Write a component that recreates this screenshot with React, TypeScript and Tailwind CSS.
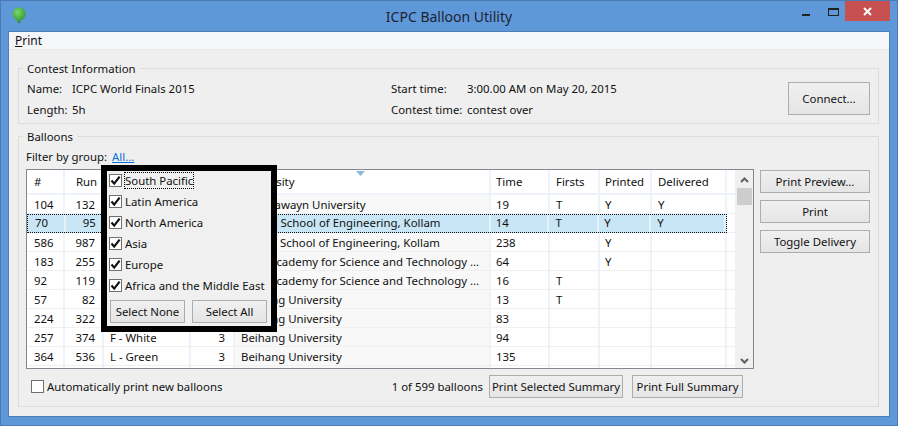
const columns = [
  { label: "#", width: "w-[38px]", cell: "pl-[7px]" },
  { label: "Run", width: "w-[39px]", cell: "pr-[7px] text-right", head: "pl-[11px]" },
  { label: "", width: "w-[87px]", cell: "pl-[6px]" },
  { label: "", width: "w-[44px]", cell: "pr-[8px] text-right" },
  { label: "University", width: "w-[256px]", cell: "pl-[6px]" },
  { label: "Time", width: "w-[59px]", cell: "pl-[5px]" },
  { label: "Firsts", width: "w-[50px]", cell: "pl-[6px]" },
  { label: "Printed", width: "w-[52px]", cell: "pl-[5px]" },
  { label: "Delivered", width: "w-[75px]", cell: "pl-[6px]" },
];

const rows = [
  ["104", "132", "", "", "Al Akhawayn University", "19", "T", "Y", "Y"],
  ["70", "95", "", "", "Amrita School of Engineering, Kollam", "14", "T", "Y", "Y"],
  ["586", "987", "", "", "Amrita School of Engineering, Kollam", "238", "", "Y", ""],
  ["183", "255", "", "", "Arab Academy for Science and Technology ...", "64", "", "Y", ""],
  ["92", "119", "", "", "Arab Academy for Science and Technology ...", "16", "T", "", ""],
  ["57", "82", "", "", "Beihang University", "13", "T", "", ""],
  ["224", "322", "", "", "Beihang University", "83", "", "", ""],
  ["257", "374", "F - White", "3", "Beihang University", "94", "", "", ""],
  ["364", "536", "L - Green", "3", "Beihang University", "135", "", "", ""],
];

const groups = [
  "South Pacific",
  "Latin America",
  "North America",
  "Asia",
  "Europe",
  "Africa and the Middle East",
];

function Btn({ children, className = "" }: { children: React.ReactNode; className?: string }) {
  return (
    <button className={`h-[23px] whitespace-nowrap border border-[#adadad] bg-gradient-to-b from-[#f0f0f0] to-[#e5e5e5] text-[#111] ${className}`}>
      {children}
    </button>
  );
}

function CheckBox({ checked }: { checked: boolean }) {
  return (
    <span className="flex h-[13px] w-[13px] shrink-0 items-center justify-center border border-[#707070] bg-white">
      {checked && (
        <svg width="11" height="11" viewBox="0 0 11 11">
          <path d="M1.5 5.5 L4.2 8.6 L9.6 1.6" fill="none" stroke="#111" strokeWidth="2.2" />
        </svg>
      )}
    </span>
  );
}

function GroupPopup() {
  return (
    <div className="absolute left-[100px] top-[164px] h-[167px] w-[176px] border-[6px] border-black bg-[#f0f0f0] pl-[2px]">
      <div className="-mt-[1px]">
        {groups.map((g, i) => (
          <div key={g} className="flex h-[21px] items-center gap-[2px] whitespace-nowrap">
            <CheckBox checked />
            <span className={i === 0 ? "border border-dotted border-black leading-[15px]" : "border border-transparent leading-[15px]"}>
              {g}
            </span>
          </div>
        ))}
      </div>
      <div className="mt-[4px] flex gap-[7px] pl-[1px]">
        <Btn className="w-[75px]">Select None</Btn>
        <Btn className="w-[75px]">Select All</Btn>
      </div>
    </div>
  );
}

function BalloonsTable() {
  return (
    <div className="flex h-[200px] w-[728px] border border-[#828790] bg-white">
      <div className="flex w-[708px] flex-col overflow-hidden">
        <div className="flex h-[25px] shrink-0 border-b-2 border-[#eef3fb]">
          <div className="flex w-[700px]">
            {columns.map((c, i) => (
              <div
                key={i}
                className={`relative flex items-center border-r-2 border-[#eef3fb] ${c.width} ${c.head ?? c.cell.replace("text-right", "")}`}
              >
                {c.label}
                {c.label === "University" && (
                  <svg className="absolute left-[121px] top-[1px]" width="9" height="5" viewBox="0 0 9 5">
                    <path d="M0 0 H9 L4.5 5 Z" fill="#8fb8d8" />
                  </svg>
                )}
              </div>
            ))}
          </div>
        </div>
        {[...rows, null].map((row, r) => (
          <div key={r} className="flex h-[19px] shrink-0 border-b border-[#f0f0f0]">
            <div className={`flex w-[700px] ${r === 1 ? "h-[19px] border border-dotted border-[#111] bg-[#c9e6f6] leading-[16px]" : "leading-[19px]"}`}>
              {columns.map((c, i) => (
                <div
                  key={i}
                  className={`truncate border-r-2 ${r === 1 ? "border-[#e6f2fa]" : "border-[#eef3fb]"} ${c.width} ${c.cell} ${c.label === "University" && r !== 1 ? "bg-[#f8f8f8]" : ""}`}
                >
                  {row ? row[i] : ""}
                </div>
              ))}
            </div>
          </div>
        ))}
      </div>
      <div className="flex w-[18px] flex-col items-center justify-between bg-[#f0f0f0] pb-[4px] pt-[7px]">
        <div className="flex flex-col items-center">
          <svg width="9" height="6" viewBox="0 0 9 6">
            <path d="M1 5 L4.5 1.5 L8 5" fill="none" stroke="#606060" strokeWidth="2" />
          </svg>
          <div className="mt-[5px] h-[17px] w-[15px] bg-[#cdcdcd]" />
        </div>
        <svg width="9" height="6" viewBox="0 0 9 6">
          <path d="M1 1 L4.5 4.5 L8 1" fill="none" stroke="#606060" strokeWidth="2" />
        </svg>
      </div>
    </div>
  );
}

export default function App() {
  return (
    <div className="relative flex h-[426px] w-[898px] flex-col border border-[#4a7bb5] bg-[#5f98d9] font-['Noto_Sans',sans-serif] text-[11.4px] text-[#111]">
      {/* title bar */}
      <div className="grid h-[30px] shrink-0 grid-cols-[1fr_auto_1fr]">
        <div className="pl-[11px] pt-[6px]">
          <svg width="14" height="17" viewBox="0 0 14 17">
            <defs>
              <radialGradient id="balloon" cx="0.4" cy="0.35" r="0.7">
                <stop offset="0" stopColor="#7ed66a" />
                <stop offset="1" stopColor="#2f9a2f" />
              </radialGradient>
            </defs>
            <path d="M7 0.5 C3 0.5 0.5 3.5 0.5 7 C0.5 10.5 4 13.5 7 14.5 C10 13.5 13.5 10.5 13.5 7 C13.5 3.5 11 0.5 7 0.5 Z" fill="url(#balloon)" />
            <path d="M6 14.5 H8 L8.5 16 H5.5 Z" fill="#2f7f2f" />
          </svg>
        </div>
        <div className="pt-[7px] text-[14px] leading-[18px] text-[#1b2430]">ICPC Balloon Utility</div>
        <div className="flex justify-end pr-[7px]">
          <div className="mr-[8px] mt-[13px] h-[2px] w-[8px] bg-[#222]" />
          <div className="ml-[10px] mr-[6px] mt-[7px] h-[8px] w-[11px] border border-t-2 border-[#222]" />
          <div className="flex h-[20px] w-[45px] items-center justify-center bg-[#c75050]">
            <svg width="9" height="9" viewBox="0 0 9 9">
              <path d="M1 1 L8 8 M8 1 L1 8" stroke="#fff" strokeWidth="2" />
            </svg>
          </div>
        </div>
      </div>

      {/* client area */}
      <div className="mx-[7px] flex h-[386px] w-[882px] flex-col border border-[#4f7fb8] bg-[#efefef]">
        <div className="flex h-[18px] shrink-0 items-center border-b border-[#e8e8e8] bg-[#f5f6f9] pl-[6px] text-[12px]">
          <span><span className="underline">P</span>rint</span>
        </div>

        <fieldset className="ml-[9px] mt-[9px] h-[65px] w-[861px] border border-[#dcdcdc] pl-[8px] pr-[8px]">
          <legend className="-ml-[4px] px-[4px] pt-[2px] leading-[16px]">Contest Information</legend>
          <div className="flex">
            <div className="grid w-[364px] grid-cols-[45px_1fr] gap-y-[5px] pt-[4px] leading-[16px]">
              <span>Name:</span>
              <span>ICPC World Finals 2015</span>
              <span>Length:</span>
              <span>5h</span>
            </div>
            <div className="grid w-[397px] grid-cols-[76px_1fr] gap-y-[5px] pt-[4px] leading-[16px]">
              <span>Start time:</span>
              <span>3:00.00 AM on May 20, 2015</span>
              <span>Contest time:</span>
              <span>contest over</span>
            </div>
            <Btn className="mt-[5px] h-[33px] w-[82px]">Connect...</Btn>
          </div>
        </fieldset>

        <fieldset className="ml-[9px] mt-[3px] h-[280px] w-[861px] border border-[#dcdcdc] pl-[7px] pr-[8px]">
          <legend className="-ml-[3px] px-[4px] pt-[2px] leading-[16px]">Balloons</legend>
          <div className="flex h-[20px] items-center pt-[3px] leading-[16px]">
            Filter by group:
            <span className="ml-[5px] text-[#0a6fd8] underline">All...</span>
          </div>
          <div className="flex gap-[6px] pt-[4px]">
            <BalloonsTable />
            <div className="flex flex-col gap-[7px] pt-[1px]">
              <Btn className="w-[110px]">Print Preview...</Btn>
              <Btn className="w-[110px]">Print</Btn>
              <Btn className="w-[110px]">Toggle Delivery</Btn>
            </div>
          </div>
          <div className="mt-[6px] flex w-[717px] items-center">
            <div className="ml-[5px] flex items-center gap-[3px]">
              <CheckBox checked={false} />
              Automatically print new balloons
            </div>
            <span className="ml-auto mr-[6px]">1 of 599 balloons</span>
            <Btn className="w-[134px]">Print Selected Summary</Btn>
            <Btn className="ml-[9px] w-[111px]">Print Full Summary</Btn>
          </div>
        </fieldset>
      </div>

      <GroupPopup />
    </div>
  );
}
